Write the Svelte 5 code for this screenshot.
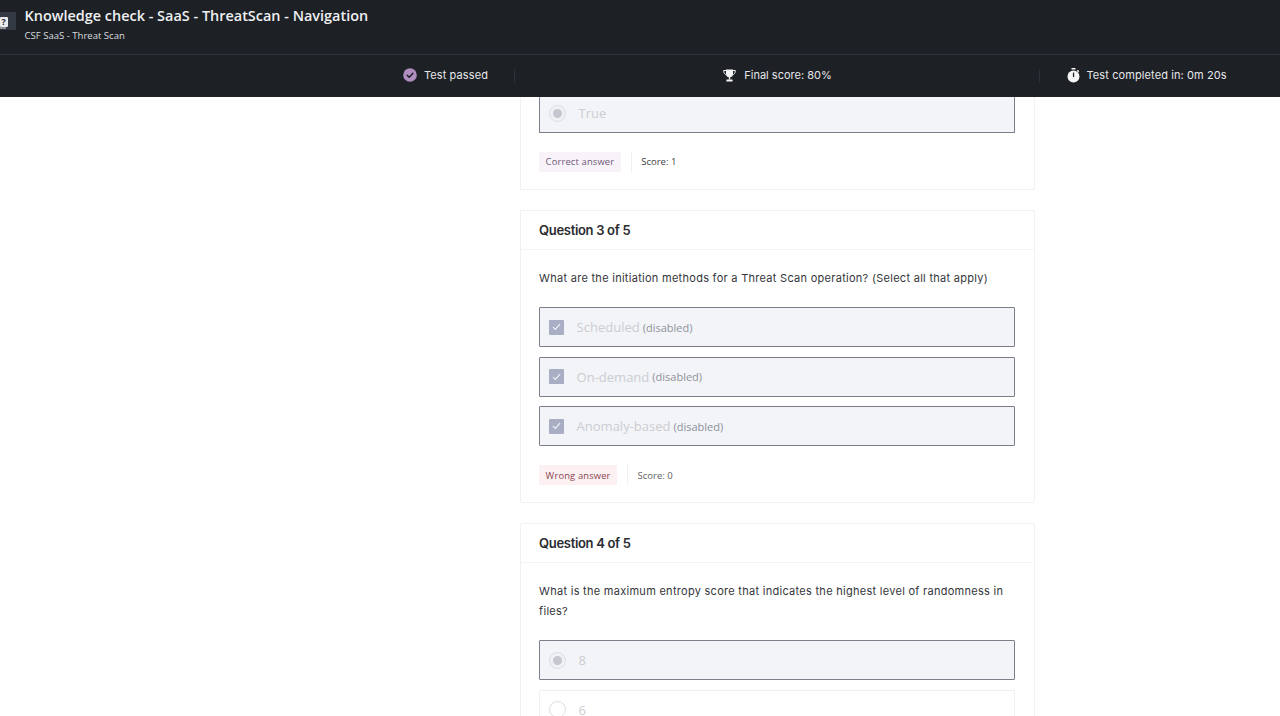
<script>
  const q3 = [
    { label: 'Scheduled' },
    { label: 'On-demand' },
    { label: 'Anomaly-based' }
  ];
</script>

<div class="page">
  <header class="top">
    <div class="titlebar">
      <div class="logo">
        <svg width="16" height="18" viewBox="0 0 16 18"><rect x="0" y="0" width="16" height="18" rx="1" fill="#343a43"/><rect x="0" y="5" width="8" height="10" rx="1" fill="#e9ebee"/><rect x="0" y="15.5" width="6" height="1" fill="#e9ebee"/><text x="1.6" y="13" class="mark">?</text></svg>
      </div>
      <div class="titles">
        <div class="title">Knowledge check - SaaS - ThreatScan - Navigation</div>
        <div class="subtitle">CSF SaaS - Threat Scan</div>
      </div>
    </div>
    <div class="stats">
      <div class="stat s1">
        <svg width="14" height="14" viewBox="0 0 14 14"><circle cx="7" cy="7" r="6.8" fill="#b08fc0"/><path d="M4.2 7.2l2 2 3.7-4" fill="none" stroke="#1d2025" stroke-width="1.5" stroke-linecap="round" stroke-linejoin="round"/></svg>
        <span>Test passed</span>
      </div>
      <div class="stat s2">
        <svg width="13" height="13" viewBox="0 0 13 13"><path d="M3 0.5h7v4.2a3.5 3.5 0 0 1-7 0z" fill="#f4f4f4"/><path d="M3 1.5H0.7c0 2.6 1 3.9 2.9 4.3M10 1.5h2.3c0 2.6-1 3.9-2.9 4.3" fill="none" stroke="#f4f4f4" stroke-width="1"/><rect x="5.8" y="7.5" width="1.4" height="3" fill="#f4f4f4"/><rect x="3.4" y="10.4" width="6.2" height="2.2" rx=".4" fill="#f4f4f4"/></svg>
        <span>Final score: 80%</span>
      </div>
      <div class="stat s3">
        <svg width="13" height="15" viewBox="0 0 13 15"><rect x="4.5" y="0" width="4" height="1.5" fill="#f6f6f6"/><rect x="10" y="2.2" width="2" height="1.6" transform="rotate(45 11 3)" fill="#f6f6f6"/><circle cx="6.5" cy="8.5" r="6" fill="#f6f6f6"/><rect x="5.9" y="4.6" width="1.3" height="4.4" fill="#1d2025"/></svg>
        <span>Test completed in: 0m 20s</span>
      </div>
    </div>
  </header>

  <main class="scroll">
    <section class="card first">
      <div class="body tail">
        <div class="opt selected cut">
          <span class="radio on"></span>
          <span class="optlabel">True</span>
        </div>
        <div class="result">
          <span class="badge good">Correct answer</span>
          <span class="score">Score: 1</span>
        </div>
      </div>
    </section>

    <section class="card">
      <h2>Question 3 of 5</h2>
      <div class="body">
        <p>What are the initiation methods for a Threat Scan operation? (Select all that apply)</p>
        <div class="opts">
          {#each q3 as o}
            <div class="opt selected">
              <span class="check">
                <svg width="9" height="8" viewBox="0 0 9 8"><path d="M1 4.2l2.3 2.3L8 1.2" fill="none" stroke="#f1f2f6" stroke-width="1.2"/></svg>
              </span>
              <span class="optlabel sq">{o.label}</span>
              <span class="dis">(disabled)</span>
            </div>
          {/each}
        </div>
        <div class="result">
          <span class="badge bad">Wrong answer</span>
          <span class="score">Score: 0</span>
        </div>
      </div>
    </section>

    <section class="card">
      <h2>Question 4 of 5</h2>
      <div class="body">
        <p>What is the maximum entropy score that indicates the highest level of randomness in files?</p>
        <div class="opts">
          <div class="opt selected">
            <span class="radio on"></span>
            <span class="optlabel">8</span>
          </div>
          <div class="opt">
            <span class="radio"></span>
            <span class="optlabel">6</span>
          </div>
        </div>
      </div>
    </section>
  </main>
</div>

<style>
  :global(body) {
    margin: 0;
    background: #fff;
  }
  .page {
    height: 716px;
    display: flex;
    flex-direction: column;
    overflow: hidden;
    font-family: "Open Sans", sans-serif;
  }
  .top {
    height: 97px;
    flex: none;
    background: #1d2025;
    color: #f2f3f4;
  }
  .titlebar {
    height: 55px;
    box-sizing: border-box;
    border-bottom: 1px solid #2e3238;
    display: flex;
    align-items: flex-start;
  }
  .logo {
    width: 24.5px;
    flex: none;
    margin-top: 12px;
    height: 26px;
  }
  .logo svg {
    display: block;
  }
  .mark {
    font: 700 9px "Open Sans", sans-serif;
    fill: #2a2e35;
  }
  .titles {
    padding-top: 6px;
  }
  .title {
    font-size: 14.45px;
    line-height: 20px;
    font-weight: 600;
    color: #eef0f2;
  }
  .subtitle {
    font-size: 9.55px;
    line-height: 13px;
    margin-top: 2.5px;
    color: #d9dcdf;
  }
  .stats {
    height: 42px;
    display: grid;
    grid-template-columns: 515px 524px 1fr;
    font-family: Inter, sans-serif;
    font-size: 11px;
    letter-spacing: 0.1px;
    color: #e6e7e9;
  }
  .stat {
    display: flex;
    align-items: center;
    gap: 7px;
    padding-bottom: 2px;
  }
  .s1 {
    justify-content: flex-end;
    padding-right: 27px;
    position: relative;
  }
  .s1::after,
  .s3::before {
    content: "";
    position: absolute;
    top: 14px;
    height: 14px;
    width: 1px;
    background: #2e3238;
  }
  .s1::after {
    right: 0;
  }
  .s2 {
    justify-content: center;
    letter-spacing: 0;
    gap: 8px;
    padding-left: 1px;
  }
  .s3 {
    position: relative;
    padding-left: 27.5px;
  }
  .s3::before {
    left: 0;
  }
  .scroll {
    flex: 1;
    min-height: 0;
    overflow: hidden;
    display: flex;
    flex-direction: column;
    align-items: center;
    gap: 20px;
    padding-left: 274px;
  }
  .card {
    width: 515px;
    flex: none;
    box-sizing: border-box;
    border: 1px solid #f0f1f2;
    border-radius: 2px;
  }
  .card.first {
    border-top: 0;
  }
  h2 {
    margin: 0;
    height: 39px;
    box-sizing: border-box;
    padding: 0 18.6px;
    border-bottom: 1px solid #f3f4f5;
    display: flex;
    align-items: center;
    font-family: Inter, sans-serif;
    font-size: 13px;
    font-weight: 600;
    letter-spacing: -0.32px;
    color: #2a2c30;
  }
  .body {
    padding: 18.9px 19px 17.5px 18.6px;
  }
  .body.tail {
    padding-top: 0;
  }
  p {
    margin: 0 0 18.9px;
    font-family: Inter, sans-serif;
    font-size: 11px;
    line-height: 19.6px;
    letter-spacing: 0.28px;
    color: #34363b;
  }
  .opts {
    display: flex;
    flex-direction: column;
    gap: 9.5px;
  }
  .opt {
    height: 40px;
    box-sizing: border-box;
    border: 1px solid #f0f0f2;
    border-radius: 1px;
    display: flex;
    align-items: center;
    padding-left: 9px;
    flex: none;
  }
  .opt.selected {
    background: #f3f4f7;
    border-color: #7b7e88;
  }
  .opt.cut {
    height: 36px;
    border-top: 0;
    padding-bottom: 3px;
  }
  .radio {
    width: 17px;
    height: 17px;
    box-sizing: border-box;
    border: 1px solid #dcdde2;
    border-radius: 50%;
    background: #fff;
    flex: none;
    display: flex;
    align-items: center;
    justify-content: center;
    margin-right: 12.5px;
  }
  .radio.on {
    background: #f0f1f4;
  }
  .radio.on::after {
    content: "";
    width: 9px;
    height: 9px;
    border-radius: 50%;
    background: #c5c7ce;
  }
  .check {
    width: 15px;
    height: 15px;
    background: #a9aec4;
    border-radius: 1px;
    flex: none;
    display: flex;
    align-items: center;
    justify-content: center;
    margin-right: 12.5px;
  }
  .optlabel {
    font-size: 13px;
    color: #cbcdd2;
  }
  .optlabel.sq {
    margin-right: 3px;
  }
  .dis {
    font-size: 11px;
    color: #8f929b;
  }
  .result {
    display: flex;
    align-items: center;
    margin-top: 19px;
  }
  .badge {
    height: 19.5px;
    padding: 0 6.5px;
    display: flex;
    align-items: center;
    font-size: 9.4px;
    letter-spacing: 0.15px;
    border-radius: 1px;
  }
  .badge.good {
    background: #f8f3f9;
    color: #6f5878;
  }
  .badge.bad {
    background: #fbf1f2;
    color: #8e4653;
  }
  .score {
    margin-left: 10px;
    padding-left: 9.5px;
    height: 19.5px;
    border-left: 1px solid #f0f1f2;
    display: flex;
    align-items: center;
    font-size: 9.5px;
    color: #3d3f44;
  }
  .bad + .score {
    color: #5e5f65;
  }
</style>
